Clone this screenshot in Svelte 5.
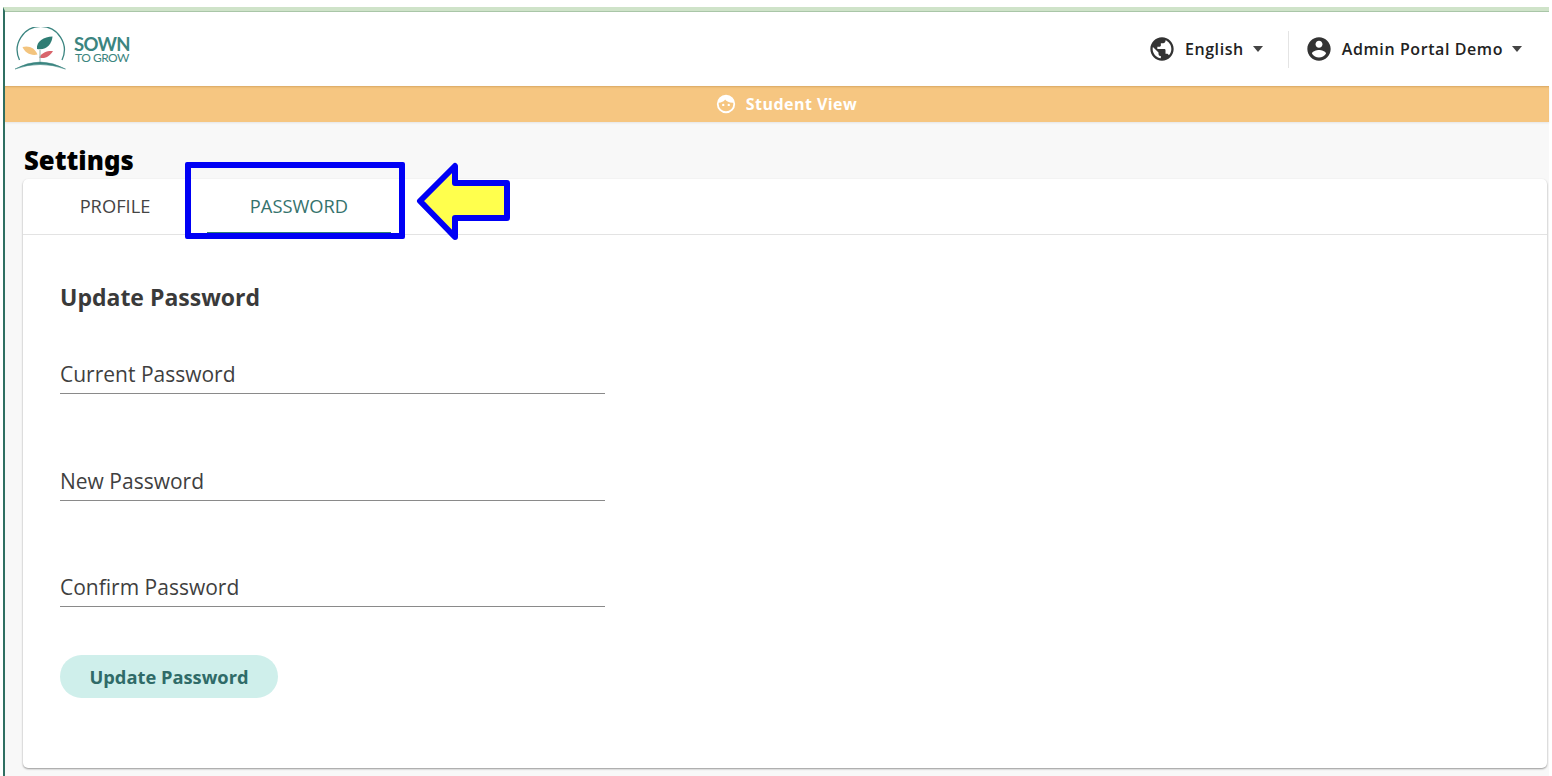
<script>
  const fields = ['Current Password', 'New Password', 'Confirm Password'];
  let activeTab = 'password';
</script>

<div class="page">
  <div class="frame">
    <header class="topbar">
      <div class="brand">
        <svg class="logo" viewBox="14 27 54 44" width="54" height="44">
          <path d="M19.5 60 A23.5 23.5 0 1 1 62 60" fill="none" stroke="#3b8580" stroke-width="1.3" />
          <path d="M15 69 Q40 55 65.500 69 Q40 60 15 69 Z" fill="#3b8580" stroke="#3b8580" stroke-width="0.5" />
          <path d="M37 49 C36 41 44 37 52.500 36.500 C52 44 46 51 37 49 Z" fill="#2f7d74" />
          <path d="M22.500 47 C29 45 35 48 37.500 54.500 C31 56 25 53 22.500 47 Z" fill="#f3c47e" />
          <path d="M39 57.500 C42 52 48 50.500 53 51 C50 56 45 59.500 39 57.500 Z" fill="#d9656b" />
          <path d="M40 62 L40 50" stroke="#8fb8b0" stroke-width="1" />
        </svg>
        <div class="brand-text">
          <span class="sown">SOWN</span>
          <span class="grow">TO GROW</span>
        </div>
      </div>
      <div class="menus">
        <div class="menu lang">
          <svg viewBox="0 0 24 24" width="28" height="28"><path fill="#333" d="M12 2C6.48 2 2 6.48 2 12s4.48 10 10 10 10-4.48 10-10S17.52 2 12 2zm-1 17.93c-3.95-.49-7-3.85-7-7.93 0-.62.08-1.21.21-1.79L9 15v1c0 1.1.9 2 2 2v1.93zm6.9-2.54c-.26-.81-1-1.39-1.9-1.39h-1v-3c0-.55-.45-1-1-1H8v-2h2c.55 0 1-.45 1-1V7h2c1.1 0 2-.9 2-2v-.41c2.93 1.19 5 4.06 5 7.41 0 2.08-.8 3.97-2.1 5.39z" /></svg>
          <span>English</span>
          <i class="caret"></i>
        </div>
        <div class="menu user">
          <svg viewBox="0 0 24 24" width="28" height="28"><path fill="#333" d="M12 2C6.48 2 2 6.48 2 12s4.48 10 10 10 10-4.48 10-10S17.52 2 12 2zm0 3c1.66 0 3 1.34 3 3s-1.34 3-3 3-3-1.34-3-3 1.34-3 3-3zm0 14.2c-2.5 0-4.71-1.28-6-3.22.03-1.99 4-3.08 6-3.08 1.99 0 5.97 1.09 6 3.08-1.29 1.94-3.5 3.22-6 3.22z" /></svg>
          <span>Admin Portal Demo</span>
          <i class="caret"></i>
        </div>
      </div>
    </header>

    <div class="banner">
      <svg viewBox="0 0 24 24" width="22" height="22">
        <path fill="#fff" d="M12 2a10 10 0 1 0 0 20 10 10 0 0 0 0-20zm0 18a8 8 0 0 1-8-8c0-.5.05-1 .14-1.45C7 10.400 9.600 9.300 11 7c1.500 2.300 4.600 3.600 8.860 3.500.09.5.14 1 .14 1.500a8 8 0 0 1-8 8z" />
        <circle cx="9" cy="13" r="1.300" fill="#fff" /><circle cx="15" cy="13" r="1.300" fill="#fff" />
      </svg>
      <span>Student View</span>
    </div>

    <main class="content">
      <h1>Settings</h1>
      <section class="card">
        <div class="tabs">
          <button class="tab" class:active={activeTab === 'profile'}>PROFILE</button>
          <button class="tab" class:active={activeTab === 'password'}>PASSWORD</button>
        </div>
        <div class="form">
          <h2>Update Password</h2>
          {#each fields as field}
            <div class="field">{field}</div>
          {/each}
          <button class="submit">Update Password</button>
        </div>
      </section>
    </main>
  </div>

  <!-- annotation drawn on top of the screenshot -->
  <div class="highlight"></div>
  <svg class="arrow" viewBox="0 0 96 80" width="96" height="80">
    <path d="M4 39 L39 4 V21 H91 V56 H39 V75 Z" fill="#ffff4d" stroke="#0000f5" stroke-width="6" stroke-linejoin="round" />
  </svg>
</div>

<style>
  :global(body) {
    margin: 0;
    background: #fff;
  }

  .page {
    position: relative;
    height: 776px;
    overflow: hidden;
    padding: 7px 3px 0;
    box-sizing: border-box;
    font-family: "Open Sans", sans-serif;
  }

  .frame {
    height: 769px;
    box-sizing: border-box;
    display: flex;
    flex-direction: column;
    border-top: 4px solid #cfe3c9;
    border-left: 2px solid #2f6f62;
    background: #f8f8f8;
  }

  .topbar {
    height: 75px;
    box-sizing: border-box;
    flex: none;
    display: flex;
    align-items: center;
    justify-content: space-between;
    background: #fff;
    border-top: 1px solid #a9c6a8;
    padding: 0 27px 0 9px;
  }

  .brand {
    display: flex;
    align-items: center;
    gap: 6px;
  }

  .brand-text {
    display: flex;
    flex-direction: column;
    font-family: Lato, sans-serif;
    color: #3b8580;
  }

  .sown {
    font-size: 18.500px;
    line-height: 18px;
    font-weight: 700;
    letter-spacing: -0.7px;
  }

  .grow {
    font-size: 12px;
    line-height: 10px;
    letter-spacing: -0.5px;
    padding-left: 1px;
  }

  .menus {
    display: flex;
    align-items: center;
  }

  .menu {
    display: flex;
    align-items: center;
    gap: 9px;
    font-size: 16px;
    font-weight: 600;
    color: #222;
    letter-spacing: 0.58px;
  }

  .lang {
    padding-right: 25px;
    height: 37px;
    border-right: 1px solid #e4e4e4;
  }

  .user {
    padding-left: 16px;
  }

  .caret {
    width: 0;
    height: 0;
    border-left: 5.500px solid transparent;
    border-right: 5.500px solid transparent;
    border-top: 6px solid #444;
  }

  .banner {
    height: 36px;
    flex: none;
    display: flex;
    align-items: center;
    justify-content: center;
    gap: 9px;
    padding-left: 18px;
    background: #f6c681;
    color: #fff;
    font-size: 16px;
    font-weight: 700;
    letter-spacing: 0.45px;
    box-shadow: inset 0 2px 2px -1px rgba(160, 110, 40, 0.35), 0 1px 2px rgba(0, 0, 0, 0.08);
  }

  .content {
    flex: 1;
    min-height: 0;
    padding: 0 2px 8px 18px;
    display: flex;
    flex-direction: column;
  }

  h1 {
    margin: 24px 0 3px 1px;
    font-family: "Noto Sans", sans-serif;
    font-size: 25.700px;
    line-height: 30px;
    font-weight: 900;
    color: #000;
  }

  .card {
    flex: 1;
    background: #fff;
    border-radius: 5px;
    box-shadow: 0 1px 2px rgba(0, 0, 0, 0.4);
  }

  .tabs {
    display: flex;
    height: 56px;
    box-sizing: border-box;
    border-bottom: 1px solid #e3e3e3;
  }

  .tab {
    width: 184px;
    height: 55px;
    box-sizing: border-box;
    border: none;
    border-bottom: 2px solid transparent;
    background: none;
    padding: 0;
    font: inherit;
    font-size: 18.300px;
    color: #444;
  }

  .tab.active {
    color: #35736d;
    border-bottom-color: #2f7d74;
  }

  .form {
    padding: 47px 37px 0;
  }

  h2 {
    margin: 0 0 46px;
    font-size: 23px;
    line-height: 30px;
    font-weight: 700;
    color: #3a3a3a;
  }

  .field {
    width: 545px;
    height: 35px;
    margin-bottom: 70.500px;
    border-bottom: 1px solid #8a8a8a;
    font-size: 21px;
    line-height: 33px;
    color: #3f3f3f;
  }

  .field:last-of-type {
    margin-bottom: 48px;
  }

  .submit {
    display: block;
    width: 218px;
    height: 43px;
    border: none;
    border-radius: 22px;
    background: #cfefeb;
    color: #2f6b68;
    font: inherit;
    font-size: 18.300px;
    font-weight: 700;
  }

  .highlight {
    position: absolute;
    left: 185px;
    top: 162px;
    width: 220px;
    height: 77px;
    box-sizing: border-box;
    border: 6px solid #0000f5;
    border-radius: 2px;
  }

  .arrow {
    position: absolute;
    left: 416px;
    top: 162px;
  }
</style>
